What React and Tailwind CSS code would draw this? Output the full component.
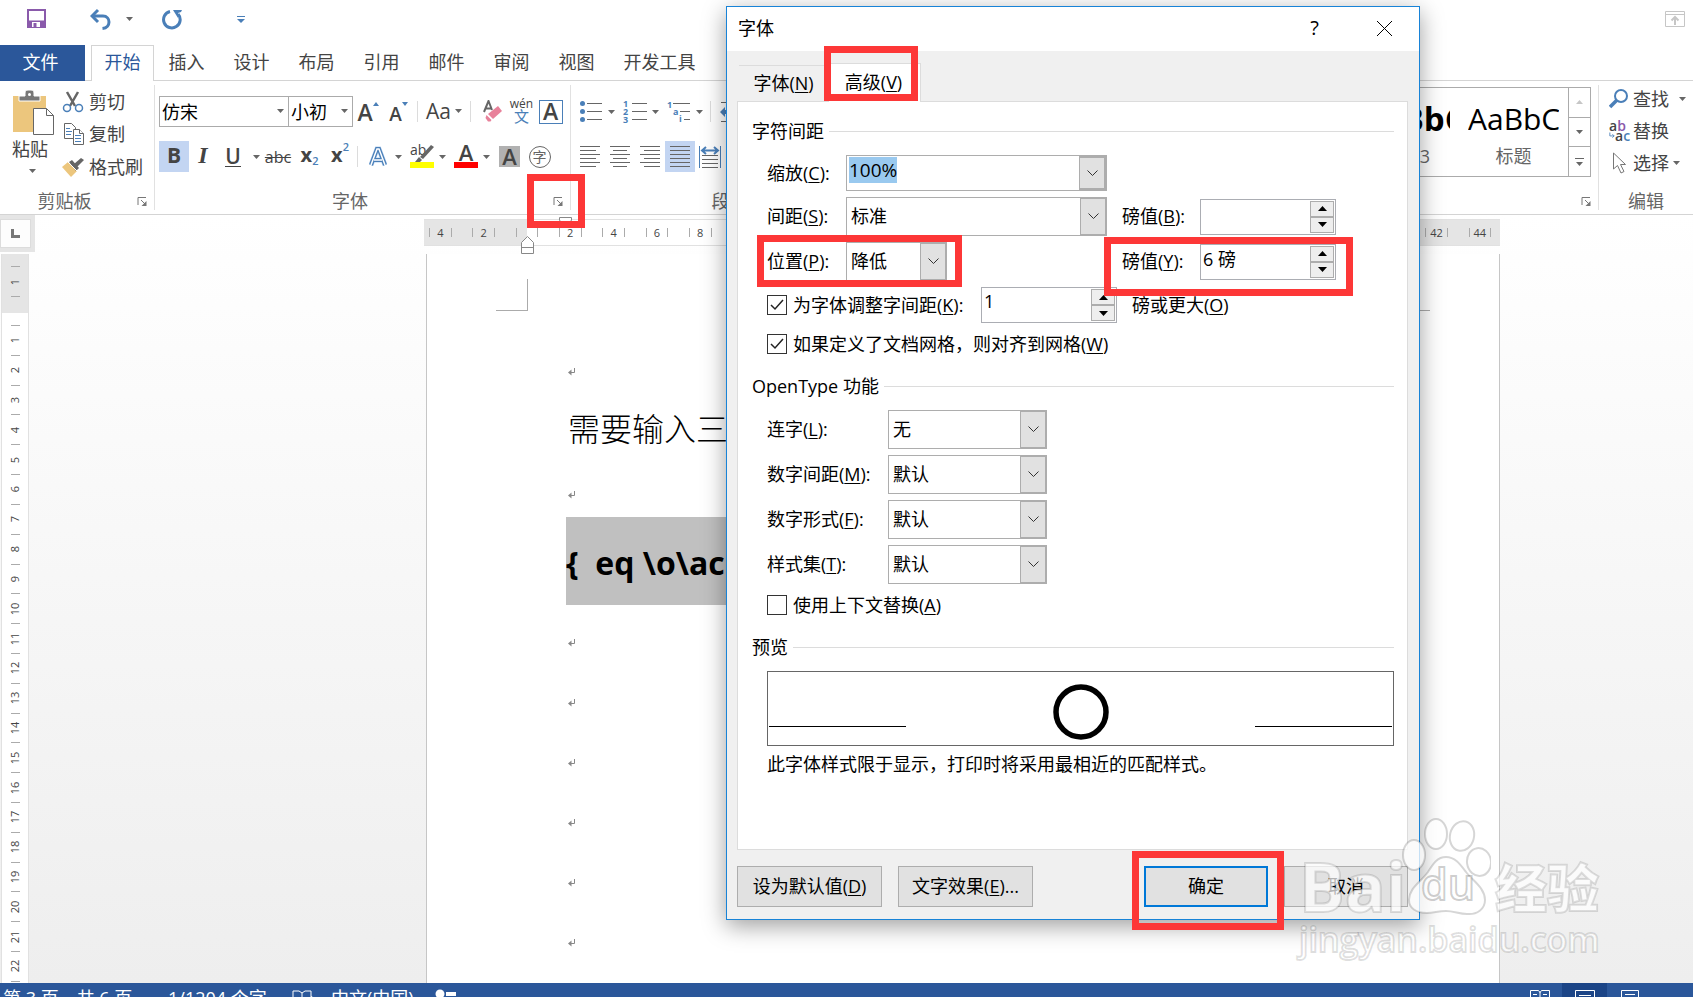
import React, { useEffect, useRef } from 'react';

const TABS = ['插入', '设计', '布局', '引用', '邮件', '审阅', '视图'];

const PARAGRAPHS_AFTER = [1, 2, 3, 4, 5, 6];

function Caret({ className = '' }) {
  return (
    <svg width="7" height="4" viewBox="0 0 7 4" className={`shrink-0 ${className}`}>
      <path d="M0 0h7L3.5 4z" fill="#666" />
    </svg>
  );
}

function Launcher({ label }) {
  return (
    <button aria-label={label} className="p-0">
      <svg width="11" height="11" viewBox="0 0 11 11" fill="none" stroke="#777">
        <path d="M1 9V1.500h8M4 4l4 4" />
        <path d="M9.500 5v5H4.500z" fill="#777" stroke="none" />
      </svg>
    </button>
  );
}

function Group({ title, launcher, className = '', children }) {
  return (
    <section className={`flex flex-col ${className}`}>
      <div className="h-[108px]">{children}</div>
      <div className="h-6 flex items-center text-[#666] pr-1.5">
        <span className={launcher ? 'flex-1 text-center pr-2' : 'flex-1 text-center'}>{title}</span>
        {launcher ? <Launcher label={launcher} /> : null}
      </div>
    </section>
  );
}

function GroupLine() {
  return <div className="w-px shrink-0 mt-1 mb-1 bg-[#e1e1e1]" />;
}

function SmallLine({ className = '' }) {
  return <div className={`w-px h-[21px] shrink-0 bg-[#dcdcdc] ${className}`} />;
}

function Tool({ label, className = '', children }) {
  return (
    <button aria-label={label} className={`h-[31px] shrink-0 flex items-center justify-center ${className}`}>
      {children}
    </button>
  );
}

// icon with a caret on the right
function SplitTool({ label, children }) {
  return (
    <button aria-label={label} className="h-[31px] w-11 shrink-0 flex items-center pl-1">
      <span className="w-6 flex justify-center">{children}</span>
      <Caret className="ml-[5px]" />
    </button>
  );
}

function Lines({ rows }) {
  return (
    <svg width="20" height="22" viewBox="0 0 20 22" stroke="#666" fill="none">
      {rows.map(([x1, x2], i) => (
        <path key={i} d={`M${x1} ${i * 4 + 0.5}H${x2}`} />
      ))}
    </svg>
  );
}

function TitleBar() {
  return (
    <header className="h-[45px] flex items-start pl-[27px] pr-2 pt-2">
      <button aria-label="保存" className="mr-[43px]">
        <svg width="20" height="21" viewBox="0 0 20 21">
          <path d="M1 2h17v17H1z" fill="#fff" stroke="#8a5aab" strokeWidth="2" />
          <path d="M1 12.500h17V19H1z" fill="#8a5aab" />
          <path d="M5 14h8v5H5z" fill="#fff" />
          <path d="M6.500 15h3v4h-3z" fill="#8a5aab" />
        </svg>
      </button>
      <button aria-label="撤消" className="flex items-center">
        <svg width="22" height="22" viewBox="0 0 22 22" fill="none" stroke="#4a7fb8" strokeWidth="3">
          <path d="M8 2L2 8l6 6" />
          <path d="M2 8h11c4 0 6 3 6 6s-2 6-6.500 6.500" />
        </svg>
        <Caret className="ml-[14px]" />
      </button>
      <button aria-label="重复" className="ml-[29px]">
        <svg width="21" height="22" viewBox="0 0 21 22" fill="none" stroke="#4a7fb8" strokeWidth="3">
          <path d="M8 3.500A8.300 8.300 0 1 0 16 6" />
          <path d="M11 2h9l-1 2-3 1v5l-5-8z" fill="#4a7fb8" stroke="none" />
        </svg>
      </button>
      <button aria-label="自定义快速访问工具栏" className="ml-[54px] mt-2">
        <svg width="8" height="8" viewBox="0 0 8 8">
          <path d="M0 0h8v1H0zM0 3h8L4 7z" fill="#4a7fb8" />
        </svg>
      </button>
      <button aria-label="功能区显示选项" className="ml-auto mt-[3px]">
        <svg width="20" height="16" viewBox="0 0 20 16" fill="none" stroke="#c6c6c6">
          <path d="M.5.5h19v15H.5zM.5 3.500h19" />
          <path d="M10 14V7M6.500 9.500L10 6l3.500 3.500" strokeWidth="2" />
        </svg>
      </button>
    </header>
  );
}

function TabStrip() {
  return (
    <nav className="h-9 flex border-b border-[#d4d4d4]">
      <button className="w-[85px] h-9 shrink-0 bg-[#2b579a] text-white pr-1 pb-0.5">文件</button>
      <button className="ml-1.5 w-[63px] h-9 shrink-0 border border-b-0 border-[#d4d4d4] bg-white text-[#2b579a] pb-1">
        开始
      </button>
      {TABS.map((tab) => (
        <button key={tab} className="w-[65px] shrink-0 pb-0.5">
          {tab}
        </button>
      ))}
      <button className="w-[101px] shrink-0 pb-0.5">开发工具</button>
    </nav>
  );
}

function ClipboardGroup() {
  return (
    <Group title="剪贴板" launcher="剪贴板设置" className="w-[154px] shrink-0">
      <div className="flex h-full pt-[5px]">
        <button className="w-[60px] flex flex-col items-center pt-1 leading-6">
          <svg width="42" height="47" viewBox="0 0 42 47" className="ml-2">
            <path d="M0 6h33v36H0z" fill="#ecc67d" />
            <path d="M6 11V6h6V3c0-2 1-3 3-3h3c2 0 3 1 3 3v3h6v5z" fill="#777" stroke="#fff" />
            <circle cx="16.500" cy="4.500" r="1.500" fill="#fff" />
            <path d="M20.500 18.500h13l7 7v19h-20z" fill="#fff" stroke="#666" />
            <path d="M33.500 18.500v7h7" fill="none" stroke="#666" />
          </svg>
          粘贴
          <Caret className="mt-2 ml-1" />
        </button>
        <div className="flex flex-col pl-[2px]">
          <button className="h-[32px] flex items-center gap-[5px]">
            <svg width="22" height="22" viewBox="0 0 22 22" fill="none">
              <path d="M5 1l8 14M16 1L8 15" stroke="#666" strokeWidth="2.500" />
              <circle cx="5" cy="17" r="3.500" stroke="#4a7fb8" strokeWidth="1.500" />
              <circle cx="17" cy="17" r="3.500" stroke="#4a7fb8" strokeWidth="1.500" />
            </svg>
            剪切
          </button>
          <button className="h-[32px] flex items-center gap-[5px]">
            <svg width="22" height="22" viewBox="0 0 22 22" fill="#fff" stroke="#666">
              <path d="M2.500.5h7l4 4v11h-11z" />
              <path d="M4 5.500h4M4 8.500h6M4 11.500h5" stroke="#4a7fb8" />
              <path d="M11.500 6.500h6l4 4v11h-10z" />
              <path d="M17.500 6.500v4h4" />
              <path d="M13 12.500h6M13 15.500h6M13 18.500h6" stroke="#4a7fb8" />
            </svg>
            复制
          </button>
          <button className="h-[34px] flex items-center gap-[5px]">
            <svg width="22" height="20" viewBox="0 0 22 20">
              <path d="M0 10l6-5 9 9-6 6z" fill="#ecc67d" />
              <path d="M7 5l3-2 7 8-3 3z" fill="#666" />
              <path d="M12 7l7-6 3 2-7 7z" fill="#666" />
              <path d="M6 5l9 9" stroke="#fff" />
            </svg>
            格式刷
          </button>
        </div>
      </div>
    </Group>
  );
}

function FontGroup() {
  return (
    <Group title="字体" launcher="字体设置" className="w-[415px] shrink-0">
      <div className="pl-1 pt-[15px] flex flex-col gap-3.5">
        <div className="flex items-center h-[31px]">
          <div className="relative w-[130px] h-[31px] shrink-0">
            <input aria-label="字体" defaultValue="仿宋" className="w-full h-full border border-[#ababab] pl-0.5 pb-0.5 text-black outline-none" />
            <Caret className="absolute right-[5px] top-[13px]" />
          </div>
          <div className="relative w-[65px] h-[31px] shrink-0 -ml-px">
            <input aria-label="字号" defaultValue="小初" className="w-full h-full border border-[#ababab] pl-0.5 pb-0.5 text-black outline-none" />
            <Caret className="absolute right-[5px] top-[13px]" />
          </div>
          <Tool label="增大字号" className="w-[30px] font-semibold text-[23px]">
            A
            <svg width="6" height="4" viewBox="0 0 6 4" className="self-start mt-1.5"><path d="M0 4h6L3 0z" fill="#4a7fb8" /></svg>
          </Tool>
          <Tool label="减小字号" className="w-[31px] font-semibold text-[19px]">
            <span className="mt-1">A</span>
            <svg width="6" height="4" viewBox="0 0 6 4" className="self-start mt-1.5"><path d="M0 0h6L3 4z" fill="#4a7fb8" /></svg>
          </Tool>
          <SmallLine className="mx-[3px]" />
          <Tool label="更改大小写" className="w-[46px] gap-1 text-[21px] font-medium pb-0.5">
            Aa
            <Caret />
          </Tool>
          <SmallLine className="ml-[3px] mr-[7px]" />
          <Tool label="清除所有格式" className="w-[29px]">
            <svg width="20" height="23" viewBox="0 0 20 23">
              <path d="M1 12L5.500 1 9 10M3 8.500h5" stroke="#666" strokeWidth="2" fill="none" />
              <path d="M15 6l4 5-9 8-5-5z" fill="#e8819a" />
              <path d="M3.500 15l5 5-1 1.500H5L2.500 18z" fill="#e8819a" />
            </svg>
          </Tool>
          <Tool label="拼音指南" className="w-[29px] flex-col">
            <span className="text-[12px] leading-[10px]">wén</span>
            <span className="text-[15px] leading-[15px] text-[#4a7fb8]">文</span>
          </Tool>
          <Tool label="字符边框" className="w-[29px]">
            <span className="w-6 h-6 border border-[#4a7fb8] text-[23px] leading-[21px] font-semibold">A</span>
          </Tool>
        </div>

        <div className="flex items-center h-[31px]">
          <Tool label="加粗" className="w-[30px] bg-[#c3d5f2] text-[21px] font-bold pb-1">B</Tool>
          <Tool label="倾斜" className="w-7 text-[24px] font-bold italic font-['Liberation_Serif',serif] pb-1">I</Tool>
          <Tool label="下划线" className="w-[45px] text-[21px] font-semibold">
            <span className="border-b border-[#444] leading-[20px] ml-1.5">U</span>
            <Caret className="ml-3" />
          </Tool>
          <Tool label="删除线" className="w-8 text-[16px] line-through">abc</Tool>
          <Tool label="下标" className="w-[31px] text-[20px] font-bold pb-1">
            x<span className="text-[11px] font-semibold text-[#4a7fb8] mt-3">2</span>
          </Tool>
          <Tool label="上标" className="w-[30px] text-[20px] font-bold pb-1">
            x<span className="text-[11px] font-semibold text-[#4a7fb8] mb-4">2</span>
          </Tool>
          <SmallLine className="ml-[2px] mr-1" />
          <SplitTool label="文本效果和版式">
            <svg width="18" height="22" viewBox="0 0 18 22" fill="none">
              <path d="M2 19L8 3h2l6 16M5 14h8" stroke="#b9d3f0" strokeWidth="5" />
              <path d="M2 19L8 3h2l6 16M5 14h8" stroke="#4a7fb8" strokeWidth="4" />
              <path d="M2 19L8 3h2l6 16M5 14h8" stroke="#fff" strokeWidth="1.500" />
            </svg>
          </SplitTool>
          <SplitTool label="突出显示">
            <span className="relative w-6 h-[23px]">
              <span className="block text-[14px] leading-[9px] text-left font-medium">ab</span>
              <svg width="24" height="23" viewBox="0 0 24 23" className="absolute left-0 top-0">
                <path d="M0 17h24v6H0z" fill="#ff0" />
                <path d="M21 0l3 2-11 12-3-2z" fill="#666" />
                <path d="M9 12l3 3-2 2H5z" fill="#666" />
              </svg>
            </span>
          </SplitTool>
          <SplitTool label="字体颜色">
            <span className="w-6 h-[23px] border-b-[6px] border-[#f00] text-[22px] leading-[15px] font-semibold">A</span>
          </SplitTool>
          <Tool label="字符底纹" className="w-[31px]">
            <span className="w-[21px] h-[21px] bg-[#b1b1b1] text-[22px] leading-[20px] font-semibold">A</span>
          </Tool>
          <Tool label="带圈字符" className="w-[29px]">
            <span className="w-[22px] h-[22px] rounded-full border border-[#666] text-[14px] leading-[19px] text-[#666]">字</span>
          </Tool>
        </div>
      </div>
    </Group>
  );
}

function ParagraphGroup() {
  return (
    <Group title="段落" className="w-[323px] shrink-0">
      <div className="pl-1 pt-[15px] flex flex-col gap-3.5">
        <div className="flex items-center h-[31px]">
          <SplitTool label="项目符号">
            <svg width="22" height="22" viewBox="0 0 22 22">
              <g fill="#4a7fb8">
                <circle cx="2.500" cy="2.500" r="2.500" />
                <circle cx="2.500" cy="10.500" r="2.500" />
                <circle cx="2.500" cy="18.500" r="2.500" />
              </g>
              <path d="M7 2.500h15M7 10.500h15M7 18.500h15" stroke="#666" />
            </svg>
          </SplitTool>
          <SplitTool label="编号">
            <span className="flex gap-1 items-center">
              <span className="flex flex-col text-[9px] leading-[8px] text-[#4a7fb8] font-bold">
                <span>1</span>
                <span>2</span>
                <span>3</span>
              </span>
              <svg width="15" height="18" viewBox="0 0 15 18">
                <path d="M0 .5h15M0 8.500h15M0 16.500h15" stroke="#666" />
              </svg>
            </span>
          </SplitTool>
          <SplitTool label="多级列表">
            <span className="relative w-6 h-[22px]">
              <span className="flex flex-col text-[9px] leading-[7px] text-[#4a7fb8] font-bold text-left">
                <span>1</span>
                <span className="pl-1.5">a</span>
                <span className="pl-3">i</span>
              </span>
              <svg width="24" height="22" viewBox="0 0 24 22" className="absolute left-0 top-0">
                <path d="M6 2.500h17M13 10.500h10M17 18.500h6" stroke="#666" />
              </svg>
            </span>
          </SplitTool>
          <SmallLine className="ml-[3px] mr-[8px]" />
          <Tool label="减少缩进量" className="w-6">
            <svg width="22" height="22" viewBox="0 0 22 22">
              <path d="M1 1.500h20M11 7.500h10M11 13.500h10M1 20.500h20" stroke="#666" />
              <path d="M0 11l5-5v3h4v4H5v3z" fill="#4a7fb8" />
            </svg>
          </Tool>
        </div>
        <div className="flex items-center h-[31px]">
          <Tool label="左对齐" className="w-[30px]"><Lines rows={[[0, 20], [0, 16], [0, 20], [0, 16], [0, 20], [0, 16]]} /></Tool>
          <Tool label="居中" className="w-[30px]"><Lines rows={[[0, 20], [3, 17], [0, 20], [3, 17], [0, 20], [3, 17]]} /></Tool>
          <Tool label="右对齐" className="w-[30px]"><Lines rows={[[0, 20], [4, 20], [0, 20], [4, 20], [0, 20], [4, 20]]} /></Tool>
          <Tool label="两端对齐" className="w-[30px] bg-[#c3d5f2]"><Lines rows={[[0, 20], [0, 20], [0, 20], [0, 20], [0, 20], [0, 20]]} /></Tool>
          <Tool label="分散对齐" className="w-[30px]">
            <svg width="22" height="22" viewBox="0 0 22 22" fill="none">
              <path d="M.5 0v22M21.500 0v22" stroke="#4a7fb8" />
              <path d="M3 4.500h16M7 1L3 4.500 7 8M15 1l4 3.500L15 8" stroke="#4a7fb8" strokeWidth="2" />
              <path d="M3 9.500h16M3 13.500h16M3 17.500h16M3 21.500h16" stroke="#666" />
            </svg>
          </Tool>
        </div>
      </div>
    </Group>
  );
}

function StyleItem({ name, bold }) {
  return (
    <button className="w-[109px] h-full shrink-0 flex flex-col items-center pt-3">
      <span className={`w-[91px] h-11 overflow-hidden whitespace-nowrap text-left text-black ${bold ? 'font-bold text-[33px] leading-[38px]' : 'text-[30px] leading-[37px]'}`}>
        AaBbC
      </span>
      <span className="text-[#666]">{name}</span>
    </button>
  );
}

function StylesGroup() {
  return (
    <Group title="样式" launcher="样式设置" className="flex-1 min-w-0">
      <div className="pl-2 pr-[7px] pt-1.5">
        <div className="h-[90px] flex border border-[#ababab]">
          <div className="flex-1 min-w-0 flex justify-end overflow-hidden">
            <StyleItem name="标题 3" bold />
            <StyleItem name="标题" />
          </div>
          <div className="w-[22px] flex flex-col border-l border-[#ababab]">
            <button aria-label="上一行" className="flex-1 flex items-center justify-center">
              <svg width="7" height="4" viewBox="0 0 7 4"><path d="M0 4h7L3.500 0z" fill="#c6c6c6" /></svg>
            </button>
            <button aria-label="下一行" className="flex-1 flex items-center justify-center border-y border-[#ababab]">
              <Caret />
            </button>
            <button aria-label="其他样式" className="flex-1 flex flex-col gap-[3px] items-center justify-center">
              <span className="w-[9px] h-px bg-[#666]" />
              <Caret />
            </button>
          </div>
        </div>
      </div>
    </Group>
  );
}

function EditGroup() {
  return (
    <Group title="编辑" className="w-[94px] shrink-0 [&>div:last-child]:pr-0">
      <div className="pt-0.5 pl-[10px] flex flex-col">
        <button className="h-[32px] flex items-center gap-1">
          <svg width="20" height="20" viewBox="0 0 20 20" fill="none" stroke="#4a7fb8">
            <circle cx="12" cy="7" r="6" strokeWidth="2" />
            <path d="M8 11l-7 7" strokeWidth="3.500" />
          </svg>
          查找
          <Caret className="ml-1.5" />
        </button>
        <button className="h-[32px] flex items-center gap-1">
          <span className="w-5 flex flex-col text-[14px] leading-[10px] font-semibold text-left">
            <span>a<span className="text-[#8a5aab]">b</span></span>
            <span className="flex">
              <svg width="6" height="9" viewBox="0 0 7 9" fill="none" stroke="#4a7fb8" className="shrink-0"><path d="M1 1v4h5M4 3l2 2-2 2" /></svg>
              a<span className="text-[#4a7fb8]">c</span>
            </span>
          </span>
          替换
        </button>
        <button className="h-[32px] flex items-center gap-1">
          <svg width="20" height="23" viewBox="0 0 20 23" fill="#fff" stroke="#777">
            <path d="M4.500 1v16l4-3.500 3.500 7.500 3-1.500-3.500-7h5z" />
          </svg>
          选择
          <Caret />
        </button>
      </div>
    </Group>
  );
}

function Ribbon() {
  return (
    <div className="flex h-[134px] border-b border-[#d4d4d4] bg-white">
      <ClipboardGroup />
      <GroupLine />
      <FontGroup />
      <GroupLine />
      <ParagraphGroup />
      <GroupLine />
      <StylesGroup />
      <GroupLine />
      <EditGroup />
    </div>
  );
}

function VerticalRuler() {
  const marks = Array.from({ length: 22 }, (_, i) => i + 1);
  return (
    <div className="w-[35px] shrink-0 flex flex-col text-[11px] leading-3 text-[#444]">
      <div className="h-[37px] bg-[#e5e5e5] pt-1 pr-1 pb-1">
        <button aria-label="制表符" className="w-[31px] h-[29px] bg-[#fdfdfd] border border-[#dcdcdc] flex items-center justify-center">
          <span className="w-[9px] h-[9px] border-l-[3px] border-b-[3px] border-[#777]" />
        </button>
      </div>
      <div className="flex-1 mt-0.5 ml-px w-7 flex flex-col bg-white border-x border-[#e1e1e1]">
        <div className="h-[59px] bg-[#e5e5e5] flex flex-col items-center">
          <span className="w-[9px] h-[13px] border-b border-[#ababab]" />
          <span className="w-[9px] h-[30px] border-b border-[#ababab] flex items-center justify-center">
            <span className="-rotate-90">1</span>
          </span>
        </div>
        <div className="flex-1 flex flex-col items-center pb-px">
          <span className="w-[9px] h-[13px] shrink-0 border-b border-[#ababab]" />
          {marks.map((n) => (
            <span key={n} className="w-[9px] flex-1 border-b border-[#ababab] flex items-center justify-center">
              <span className="-rotate-90">{n}</span>
            </span>
          ))}
        </div>
      </div>
    </div>
  );
}

function HorizontalRuler() {
  const marks = Array.from({ length: 49 }, (_, i) => i - 4);
  return (
    <div className="relative h-[27px] -ml-0.5 pl-[5px] pr-[9px] flex items-center border-y border-[#e1e1e1] text-[11px] leading-3 text-[#444] bg-[linear-gradient(90deg,#e5e5e5_103px,#fff_103px,#fff_976px,#e5e5e5_976px)]">
      {marks.map((n) => (
        <span key={n} className="flex-1 h-[9px] flex items-center justify-center border-r border-[#ababab] first:border-l">
          {n !== 0 && n % 2 === 0 ? Math.abs(n) : ''}
        </span>
      ))}
      <svg width="13" height="8" viewBox="0 0 13 8" className="absolute left-[135px] -top-[3px]" fill="#fff" stroke="#888">
        <path d="M.5.5h12v3l-6 4-6-4z" />
      </svg>
      <svg width="13" height="18" viewBox="0 0 13 18" className="absolute left-[97px] top-4" fill="#fff" stroke="#888">
        <path d="M.5 6.500l6-6 6 6v11H.5zM.5 11.500h12" />
      </svg>
    </div>
  );
}

function ParagraphMark() {
  return (
    <svg width="8" height="8" viewBox="0 0 8 8" fill="none" stroke="#888">
      <path d="M6.500 0v4.500H1" />
      <path d="M0 4.500l3.500-3v6z" fill="#888" stroke="none" />
    </svg>
  );
}

function DocumentPage() {
  return (
    <article className="relative flex-1 mt-2 border-x border-[#c6c6c6] bg-white pl-[139px] pt-[88px] overflow-hidden">
      <span className="absolute left-[69px] top-[25px] w-8 h-8 border-r border-b border-[#ababab]" />
      <span className="absolute right-[69px] top-[25px] w-8 h-8 border-l border-b border-[#ababab]" />
      <p className="h-[59px] flex items-center pl-0.5"><ParagraphMark /></p>
      <p className="h-[59px] pb-1 flex items-center pl-0.5 text-[32px] font-light text-black">需要输入三</p>
      <p className="h-[57px] pt-3 flex items-center pl-0.5"><ParagraphMark /></p>
      <p className="h-[88px] w-[600px] pt-1 bg-[#c0c0c0] flex items-center text-[32px] font-bold text-black whitespace-pre">
        {'{  eq \\o\\ac'}
      </p>
      <div className="mt-2">
        {PARAGRAPHS_AFTER.map((n) => (
          <p key={n} className="h-[60px] flex items-center pl-0.5"><ParagraphMark /></p>
        ))}
      </div>
    </article>
  );
}

function StatusBar() {
  return (
    <footer className="h-3.5 shrink-0 overflow-hidden bg-[#2b579a] text-white">
      <div className="h-[30px] flex items-center pl-[3px] pr-[41px]">
        <span className="whitespace-nowrap w-[165px]">第 3 页，共 6 页</span>
        <span className="whitespace-nowrap w-[124px]">1/1204 个字</span>
        <svg width="22" height="18" viewBox="0 0 22 18" fill="none" stroke="#fff">
          <path d="M1 2h6l3 2 3-2h6v6M10 4v12l-3-2H1V2M13 10l3 4 4-7" />
        </svg>
        <span className="ml-[17px] whitespace-nowrap w-[104px]">中文(中国)</span>
        <svg width="22" height="18" viewBox="0 0 22 18" fill="#fff">
          <circle cx="5" cy="5" r="4.500" />
          <path d="M11 3h10v4H11zM2 11h18v5H2z" />
        </svg>
        <button aria-label="阅读视图" className="ml-auto w-[45px] h-[30px] flex items-center justify-center">
          <svg width="20" height="16" viewBox="0 0 20 16" fill="none" stroke="#fff">
            <path d="M.5.5h8l1.500 2 1.500-2h8v14H.5zM10 2v12M3 4.500h4M3 7.500h4M13 4.500h4M13 7.500h4" />
          </svg>
        </button>
        <button aria-label="页面视图" className="w-[45px] h-[30px] bg-[#1c4587] flex items-center justify-center">
          <svg width="20" height="16" viewBox="0 0 20 16" fill="none" stroke="#fff">
            <path d="M.5.5h19v15H.5zM4 5.500h12M4 9.500h12" />
          </svg>
        </button>
        <button aria-label="Web 版式视图" className="w-[45px] h-[30px] flex items-center justify-center">
          <svg width="18" height="16" viewBox="0 0 18 16" fill="none" stroke="#fff">
            <path d="M.5 15V.5h17V8M4 4.500h10M4 8.500h6" />
          </svg>
        </button>
      </div>
    </footer>
  );
}

// red frame over the parent element
function Highlight({ className }) {
  return <span className={`absolute z-20 border-[7px] border-[#fd3737] pointer-events-none ${className}`} />;
}

function Key({ text, k, end = '' }) {
  return (
    <>
      {text}(<u className="underline underline-offset-2">{k}</u>){end}
    </>
  );
}

function ComboArrow() {
  return (
    <span className="absolute right-0 top-0 h-full w-[27px] bg-[#e1e1e1] border-2 border-l border-[#adadad] flex items-center justify-center pointer-events-none">
      <svg width="11" height="7" viewBox="0 0 11 7" fill="none" stroke="#333"><path d="M.5.5l5 5 5-5" /></svg>
    </span>
  );
}

function Combo({ id, value, className }) {
  return (
    <div className={`relative h-[39px] ${className}`}>
      <select id={id} className="appearance-none w-full h-full border border-[#adadad] bg-white pl-1 pb-0.5 outline-none">
        <option>{value}</option>
      </select>
      <ComboArrow />
    </div>
  );
}

function Spin({ id, value = '' }) {
  return (
    <div className="w-[136px] h-9 flex border border-[#abadb3] bg-white">
      <input id={id} defaultValue={value} className="flex-1 min-w-0 h-[26px] pl-0.5 outline-none" />
      <div className="w-[26px] p-px flex flex-col">
        <button aria-label="增加" className="flex-1 bg-[#eee] border border-[#adadad] flex items-center justify-center">
          <svg width="9" height="5" viewBox="0 0 9 5"><path d="M0 5h9L4.500 0z" fill="#000" /></svg>
        </button>
        <button aria-label="减少" className="flex-1 bg-[#eee] border border-[#adadad] flex items-center justify-center">
          <svg width="9" height="5" viewBox="0 0 9 5"><path d="M0 0h9L4.500 5z" fill="#000" /></svg>
        </button>
      </div>
    </div>
  );
}

function Check({ id, checked }) {
  return (
    <span className="relative w-5 h-5 shrink-0">
      <input id={id} type="checkbox" defaultChecked={checked} className="appearance-none block w-5 h-5 border border-[#333] bg-white" />
      {checked ? (
        <svg width="20" height="20" viewBox="0 0 20 20" fill="none" stroke="#222" strokeWidth="1.500" className="absolute left-0 top-0 pointer-events-none">
          <path d="M4 10l4 4 8-9" />
        </svg>
      ) : null}
    </span>
  );
}

function SectionTitle({ children, className = '' }) {
  return (
    <div className={`h-6 flex items-center gap-[5px] ${className}`}>
      <span>{children}</span>
      <span className="flex-1 h-px bg-[#dcdcdc]" />
    </div>
  );
}

function FontDialog() {
  const scaleRef = useRef(null);

  useEffect(() => {
    scaleRef.current.focus({ preventScroll: true });
    scaleRef.current.select();
  }, []);

  const openType = [
    { id: 'liga', text: '连字', k: 'L', value: '无' },
    { id: 'numspace', text: '数字间距', k: 'M', value: '默认' },
    { id: 'numform', text: '数字形式', k: 'F', value: '默认' },
    { id: 'styleset', text: '样式集', k: 'T', value: '默认' },
  ];

  return (
    <div role="dialog" aria-label="字体" className="absolute left-[726px] top-1.5 w-[694px] border border-[#1883d7] bg-[#f0f0f0] text-black shadow-[0_6px_22px_rgba(0,0,0,0.38)]">
      <div className="h-11 bg-white flex items-center pl-[11px] pr-[26px] pb-0.5">
        <h1 className="flex-1">字体</h1>
        <button aria-label="帮助" className="text-[20px] mr-[57px]">?</button>
        <button aria-label="关闭">
          <svg width="17" height="17" viewBox="0 0 17 17" stroke="#000" fill="none"><path d="M1 1l15 15M16 1L1 16" /></svg>
        </button>
      </div>

      <div className="pl-[10px] pr-[11px] pb-3">
        <div className="h-[50px] flex items-end pl-0.5">
          <button className="w-[89px] h-9 border-t border-[#dcdcdc] pb-0.5"><Key text="字体" k="N" /></button>
          <div className="relative -mb-px">
            <button className="w-[93px] h-[39px] bg-white border border-b-0 border-[#dcdcdc] pr-0.5 pb-0.5"><Key text="高级" k="V" /></button>
            <Highlight className="-left-1 -top-[17px] w-[94px] h-[55px]" />
          </div>
        </div>

        <div className="bg-white border border-[#dcdcdc] pt-[17px] pl-3.5 pr-[13px] pb-[73px]">
          <SectionTitle>字符间距</SectionTitle>
          <div className="mt-3 pl-[15px] flex flex-col gap-1.5">
            <div className="flex items-center h-9">
              <label htmlFor="scale" className="w-[79px]"><Key text="缩放" k="C" end=":" /></label>
              <div className="relative w-[261px] h-9 border border-[#adadad]">
                <input id="scale" ref={scaleRef} defaultValue="100%" className="w-full h-7 pl-0.5 text-[19px] leading-6 outline-none selection:bg-[#99c9ef] selection:text-black" />
                <ComboArrow />
              </div>
            </div>
            <div className="flex items-center h-[39px]">
              <label htmlFor="spacing" className="w-[79px] pb-0.5"><Key text="间距" k="S" end=":" /></label>
              <Combo id="spacing" value="标准" className="w-[261px]" />
              <label htmlFor="spacingBy" className="w-[93px] pl-[15px] pb-0.5"><Key text="磅值" k="B" end=":" /></label>
              <Spin id="spacingBy" />
            </div>
            <div className="flex items-center h-[39px]">
              <div className="relative flex items-center w-[340px]">
                <label htmlFor="position" className="w-[79px] pb-0.5"><Key text="位置" k="P" end=":" /></label>
                <Combo id="position" value="降低" className="w-[101px]" />
                <Highlight className="-left-[10px] -top-[7px] w-[205px] h-[52px]" />
              </div>
              <div className="relative flex items-center">
                <label htmlFor="positionBy" className="w-[93px] pl-[15px] pb-0.5"><Key text="磅值" k="Y" end=":" /></label>
                <Spin id="positionBy" value="6 磅" />
                <Highlight className="-left-[3px] -top-[7px] w-[249px] h-[59px]" />
              </div>
            </div>
            <div className="flex items-center h-9">
              <Check id="kern" checked />
              <label htmlFor="kern" className="w-[194px] pl-1.5"><Key text="为字体调整字间距" k="K" end=":" /></label>
              <Spin id="kernSize" value="1" />
              <label htmlFor="kernSize" className="pl-[15px]"><Key text="磅或更大" k="O" /></label>
            </div>
            <div className="flex items-center h-[30px]">
              <Check id="grid" checked />
              <label htmlFor="grid" className="pl-1.5"><Key text="如果定义了文档网格，则对齐到网格" k="W" /></label>
            </div>
          </div>

          <SectionTitle className="mt-[15px]">OpenType 功能</SectionTitle>
          <div className="mt-3 pl-[15px] flex flex-col gap-1.5">
            {openType.map((row) => (
              <div key={row.id} className="flex items-center h-[39px]">
                <label htmlFor={row.id} className="w-[121px] pb-0.5"><Key text={row.text} k={row.k} end=":" /></label>
                <Combo id={row.id} value={row.value} className="w-[159px]" />
              </div>
            ))}
            <div className="flex items-center h-[30px]">
              <Check id="context" />
              <label htmlFor="context" className="pl-1.5"><Key text="使用上下文替换" k="A" /></label>
            </div>
          </div>

          <SectionTitle className="mt-[15px]">预览</SectionTitle>
          <div className="mt-3 ml-[15px] h-[75px] border border-[#666] flex justify-between items-center px-px">
            <span className="w-[137px] h-px bg-black mt-9" />
            <svg width="56" height="56" viewBox="0 0 56 56" className="mt-1.5">
              <circle cx="28" cy="28" r="25" fill="none" stroke="#000" strokeWidth="5.500" />
            </svg>
            <span className="w-[137px] h-px bg-black mt-9" />
          </div>
          <p className="mt-1.5 ml-[15px]">此字体样式限于显示，打印时将采用最相近的匹配样式。</p>
        </div>

        <div className="mt-4 flex items-center">
          <button className="w-[145px] h-[41px] bg-[#e1e1e1] border border-[#adadad] pb-0.5"><Key text="设为默认值" k="D" /></button>
          <button className="ml-4 w-[135px] h-[41px] bg-[#e1e1e1] border border-[#adadad] pb-0.5"><Key text="文字效果" k="E" end="..." /></button>
          <div className="relative ml-auto">
            <button className="w-[124px] h-[41px] bg-[#e1e1e1] border-2 border-[#0078d7] pb-0.5">确定</button>
            <Highlight className="-left-3 -top-[15px] w-[152px] h-[79px]" />
          </div>
          <button className="ml-4 w-[124px] h-[41px] bg-[#e1e1e1] border border-[#adadad] pb-0.5">取消</button>
        </div>
      </div>
    </div>
  );
}

function Watermark() {
  return (
    <div className="absolute right-[90px] bottom-[38px] w-[304px] z-30 pointer-events-none text-white/70 font-bold [-webkit-text-stroke:2px_rgba(0,0,0,0.12)]">
      <div className="flex items-end h-[102px]">
        <span className="w-[98px] text-[68px] leading-[66px]">Bai</span>
        <span className="relative w-[94px] h-[102px] shrink-0">
          <svg width="94" height="102" viewBox="0 0 94 102" className="absolute left-0 top-0">
            <g fill="#fff" fillOpacity="0.750" stroke="#000" strokeOpacity="0.160" strokeWidth="2">
              <ellipse cx="17" cy="38" rx="11" ry="15" />
              <ellipse cx="39" cy="17" rx="11" ry="15" />
              <ellipse cx="65" cy="19" rx="12" ry="15" transform="rotate(14 65 19)" />
              <ellipse cx="82" cy="45" rx="12" ry="14" transform="rotate(-8 82 45)" />
              <path d="M49 40c9 0 14 7 20 15 7 9 19 16 19 28 0 9-8 15-18 14-8 0-13-3-21-3s-12 2-19 2c-11 0-18-5-18-13 0-12 12-18 19-28 5-8 9-15 18-15z" />
            </g>
          </svg>
          <span className="absolute left-[24px] top-[43px] text-[43px] leading-[48px] font-semibold [-webkit-text-stroke:2px_rgba(0,0,0,0.2)]">du</span>
        </span>
        <span className="pl-1 text-[52px] leading-[62px] whitespace-nowrap font-black">经验</span>
      </div>
      <div className="text-[34px] leading-[40px] font-semibold whitespace-nowrap">jingyan.baidu.com</div>
    </div>
  );
}

function App() {
  return (
    <div className="relative h-screen overflow-hidden flex flex-col bg-white text-[18px] leading-6 text-[#444] font-['Open_Sans','Noto_Sans_CJK_SC',sans-serif]">
      <TitleBar />
      <TabStrip />
      <Ribbon />
      <main className="flex-1 min-h-0 flex bg-linear-to-b from-white to-[#eee]">
        <VerticalRuler />
        <div className="flex-1 min-w-0 flex flex-col pt-1 pl-[391px] pr-[193px]">
          <HorizontalRuler />
          <DocumentPage />
        </div>
      </main>
      <StatusBar />
      <Highlight className="left-[527px] top-[174px] w-[58px] h-[54px]" />
      <FontDialog />
      <Watermark />
    </div>
  );
}

export default App;
